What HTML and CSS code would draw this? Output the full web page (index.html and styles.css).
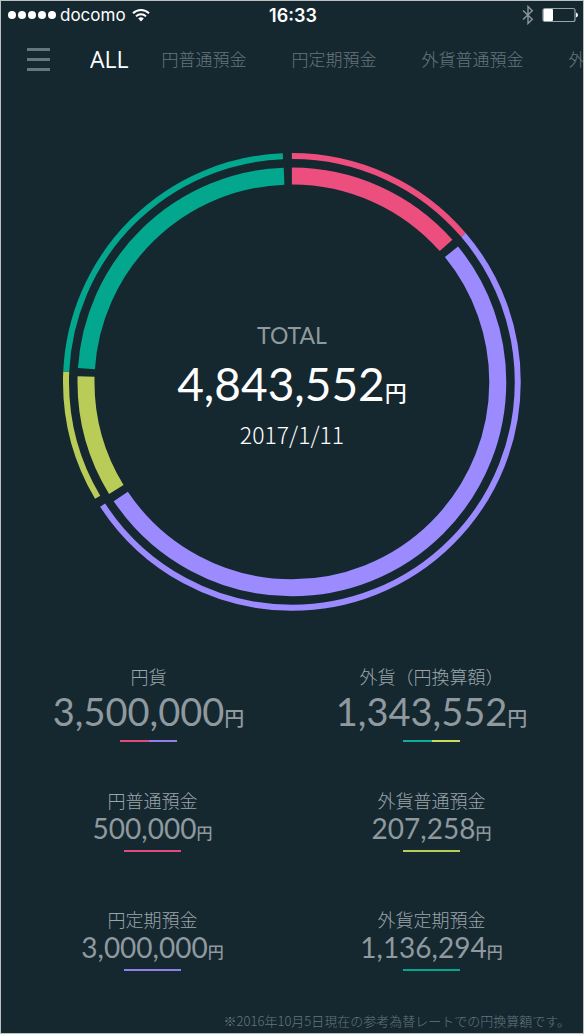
FILE: index.html
```
<!DOCTYPE html>
<html lang="ja">
<head>
  <meta charset="UTF-8">
  <meta name="viewport" content="width=device-width, initial-scale=1">
  <title>ALL</title>
  <link rel="stylesheet" href="styles.css">
</head>
<body>
  <div class="app">
    <div class="status-bar">
      <div class="carrier">
        <svg class="signal" width="48" height="10" viewBox="0 0 48 10" fill="#fff">
          <circle cx="4" cy="5" r="4"/>
          <circle cx="14" cy="5" r="4"/>
          <circle cx="24" cy="5" r="4"/>
          <circle cx="34" cy="5" r="4"/>
          <circle cx="44" cy="5" r="4"/>
        </svg>
        <span>docomo</span>
        <svg class="wifi" width="18" height="14" viewBox="0 0 18 14" fill="none" stroke="#fff" stroke-width="2">
          <path d="M1 5.2a11.3 11.3 0 0 1 16 0"/>
          <path d="M4 8.4a7 7 0 0 1 10 0"/>
          <path d="M6.2 10.6a4 4 0 0 1 5.6 0L9 13.4z" fill="#fff" stroke="none"/>
        </svg>
      </div>
      <time class="clock">16:33</time>
      <div class="power">
        <svg width="12" height="20" viewBox="0 0 12 20" fill="none" stroke="#8b959b" stroke-width="1.4">
          <path d="M1 5.5l9.3 8.7L6 18.5v-17l4.3 4.3L1 14.5"/>
        </svg>
        <svg width="36" height="16" viewBox="0 0 36 16">
          <rect x="1" y="1.5" width="32" height="13" rx="2" fill="none" stroke="#9aa3a8" stroke-width="1.2"/>
          <rect x="1.5" y="2" width="9.5" height="12" rx="1" fill="#fff"/>
          <path d="M34 5.5q2 .6 2 2.5t-2 2.5z" fill="#fff"/>
        </svg>
      </div>
    </div>

    <header class="menu">
      <button class="menu-button" type="button" aria-label="メニュー">
        <span></span>
        <span></span>
        <span></span>
      </button>
      <nav class="tabs">
        <a class="active" href="#all">ALL</a>
        <a href="#yen-ordinary">円普通預金</a>
        <a href="#yen-time">円定期預金</a>
        <a href="#foreign-ordinary">外貨普通預金</a>
        <a href="#foreign-time">外貨定期預金</a>
      </nav>
    </header>

    <main>
      <section class="chart">
        <svg class="rings" viewBox="0 0 460 460" fill="none">
          <!-- outer ring: yen / foreign currency -->
          <g stroke-width="6" transform="rotate(-90 230 230)">
            <circle class="pink" cx="230" cy="230" r="226" pathLength="360" stroke-dasharray="49.4 360"/>
            <circle class="purple" cx="230" cy="230" r="226" pathLength="360" stroke-dasharray="187.5 360" stroke-dashoffset="-49.4"/>
            <circle class="lime" cx="230" cy="230" r="226" pathLength="360" stroke-dasharray="33.3 360" stroke-dashoffset="-239.3"/>
            <circle class="green" cx="230" cy="230" r="226" pathLength="360" stroke-dasharray="85.1 360" stroke-dashoffset="-272.6"/>
          </g>
          <!-- inner ring: one arc per account -->
          <g stroke-width="17" transform="rotate(-90 230 230)">
            <circle class="pink" cx="230" cy="230" r="206" pathLength="360" stroke-dasharray="48.5 360"/>
            <circle class="purple" cx="230" cy="230" r="206" pathLength="360" stroke-dasharray="185.4 360" stroke-dashoffset="-50.8"/>
            <circle class="lime" cx="230" cy="230" r="206" pathLength="360" stroke-dasharray="33 360" stroke-dashoffset="-238.5"/>
            <circle class="green" cx="230" cy="230" r="206" pathLength="360" stroke-dasharray="84.1 360" stroke-dashoffset="-273.7"/>
          </g>
        </svg>
        <div class="total">
          <h1>TOTAL</h1>
          <p class="total-amount">4,843,552<small>円</small></p>
          <time class="date">2017/1/11</time>
        </div>
      </section>

      <section class="summary">
        <div class="item">
          <h2>円貨</h2>
          <p>3,500,000<small>円</small></p>
          <span class="line line-yen"></span>
        </div>
        <div class="item">
          <h2>外貨（円換算額）</h2>
          <p>1,343,552<small>円</small></p>
          <span class="line line-foreign"></span>
        </div>
      </section>

      <section class="accounts">
        <div class="item">
          <h2>円普通預金</h2>
          <p>500,000<small>円</small></p>
          <span class="line line-pink"></span>
        </div>
        <div class="item">
          <h2>外貨普通預金</h2>
          <p>207,258<small>円</small></p>
          <span class="line line-lime"></span>
        </div>
        <div class="item">
          <h2>円定期預金</h2>
          <p>3,000,000<small>円</small></p>
          <span class="line line-purple"></span>
        </div>
        <div class="item">
          <h2>外貨定期預金</h2>
          <p>1,136,294<small>円</small></p>
          <span class="line line-green"></span>
        </div>
      </section>
    </main>

    <footer>※2016年10月5日現在の参考為替レートでの円換算額です。</footer>
  </div>
</body>
</html>
```
FILE: styles.css
```
* {
  box-sizing: border-box;
}

body {
  margin: 0;
  background-color: #152830;
  color: #8f999e;
  font-family: Lato, "Noto Sans CJK JP", sans-serif;
}

h1,
h2,
p {
  margin: 0;
  font-weight: 400;
}

small {
  font-weight: 500;
  line-height: 0;
}

.app {
  display: flex;
  flex-direction: column;
  min-height: 100vh;
  border: 1px solid #bcc0c1;
  overflow: hidden;
}

/* status bar */
.status-bar {
  display: grid;
  grid-template-columns: 1fr auto 1fr;
  align-items: center;
  height: 28px;
  padding: 0 5px 0 7px;
  color: #fff;
  font-family: Inter, sans-serif;
  font-size: 17px;
}

.carrier,
.power {
  display: flex;
  align-items: center;
  gap: 4px;
}

.wifi {
  margin-left: 2px;
}

.clock {
  font-size: 18px;
  font-weight: 600;
}

.power {
  justify-content: flex-end;
  gap: 8px;
}

/* menu */
.menu {
  display: flex;
  align-items: center;
  height: 60px;
  padding-left: 26px;
}

.menu-button {
  display: flex;
  flex-direction: column;
  gap: 7px;
  width: 23px;
  padding: 0;
  border: none;
  background: none;
  cursor: pointer;
}

.menu-button span {
  height: 3px;
  background-color: #67757c;
}

.tabs {
  display: flex;
  flex: 1;
  align-items: center;
  gap: 45px;
  min-width: 0;
  margin-left: 40px;
  overflow: hidden;
}

.tabs a {
  flex-shrink: 0;
  color: #67757c;
  font-family: "Noto Sans CJK JP", sans-serif;
  font-size: 17px;
  font-weight: 300;
  line-height: 30px;
  text-decoration: none;
}

.tabs .active {
  margin-right: -12px;
  color: #fff;
  font-family: "Open Sans", sans-serif;
  font-size: 23px;
  font-weight: 400;
}

/* chart */
.chart {
  display: grid;
  place-items: center;
  margin-top: 63px;
}

.rings,
.total {
  grid-area: 1 / 1;
}

.rings {
  display: block;
  width: 79%;
}

.pink {
  stroke: #ec4e7d;
}

.purple {
  stroke: #9b8bff;
}

.lime {
  stroke: #b9cc57;
}

.green {
  stroke: #03a78e;
}

.total {
  padding-top: 6px;
  color: #fff;
  text-align: center;
}

.total h1 {
  color: #8f999e;
  font-size: 23px;
  line-height: 28px;
}

.total-amount {
  font-size: 46px;
  line-height: 70px;
}

.total-amount small {
  font-size: 22px;
}

.date {
  display: block;
  font-family: "Noto Sans CJK JP", sans-serif;
  font-size: 23px;
  font-weight: 300;
  line-height: 30px;
}

/* amounts */
.summary,
.accounts {
  display: grid;
  grid-template-columns: 1fr 1fr;
}

.summary {
  margin-top: 52px;
  padding: 0 10px 0 6px;
}

.accounts {
  row-gap: 55px;
  margin-top: 46px;
  padding: 0 12px;
}

.item {
  display: flex;
  flex-direction: column;
  align-items: center;
}

.item h2 {
  color: #9ca5aa;
  font-size: 18px;
  font-weight: 300;
  line-height: 26px;
}

.item p {
  font-size: 28px;
  line-height: 28px;
}

.item small {
  font-size: 16px;
}

.summary .item p {
  font-size: 38px;
  line-height: 42px;
}

.summary .item small {
  font-size: 20px;
}

.line {
  width: 57px;
  height: 2px;
  margin-top: 8px;
}

.line-yen {
  background: linear-gradient(to right, #e04c7a 50%, #8f80ee 50%);
}

.line-foreign {
  background: linear-gradient(to right, #0fae98 50%, #c8db60 50%);
}

.line-pink {
  background-color: #e04c7a;
}

.line-lime {
  background-color: #b9cc57;
}

.line-purple {
  background-color: #8f80ee;
}

.line-green {
  background-color: #03a78e;
}

footer {
  margin-top: auto;
  padding: 0 13px 2px 0;
  color: #67757c;
  font-family: "Noto Sans CJK JP", sans-serif;
  font-size: 13px;
  font-weight: 300;
  line-height: 20px;
  text-align: right;
}
```
